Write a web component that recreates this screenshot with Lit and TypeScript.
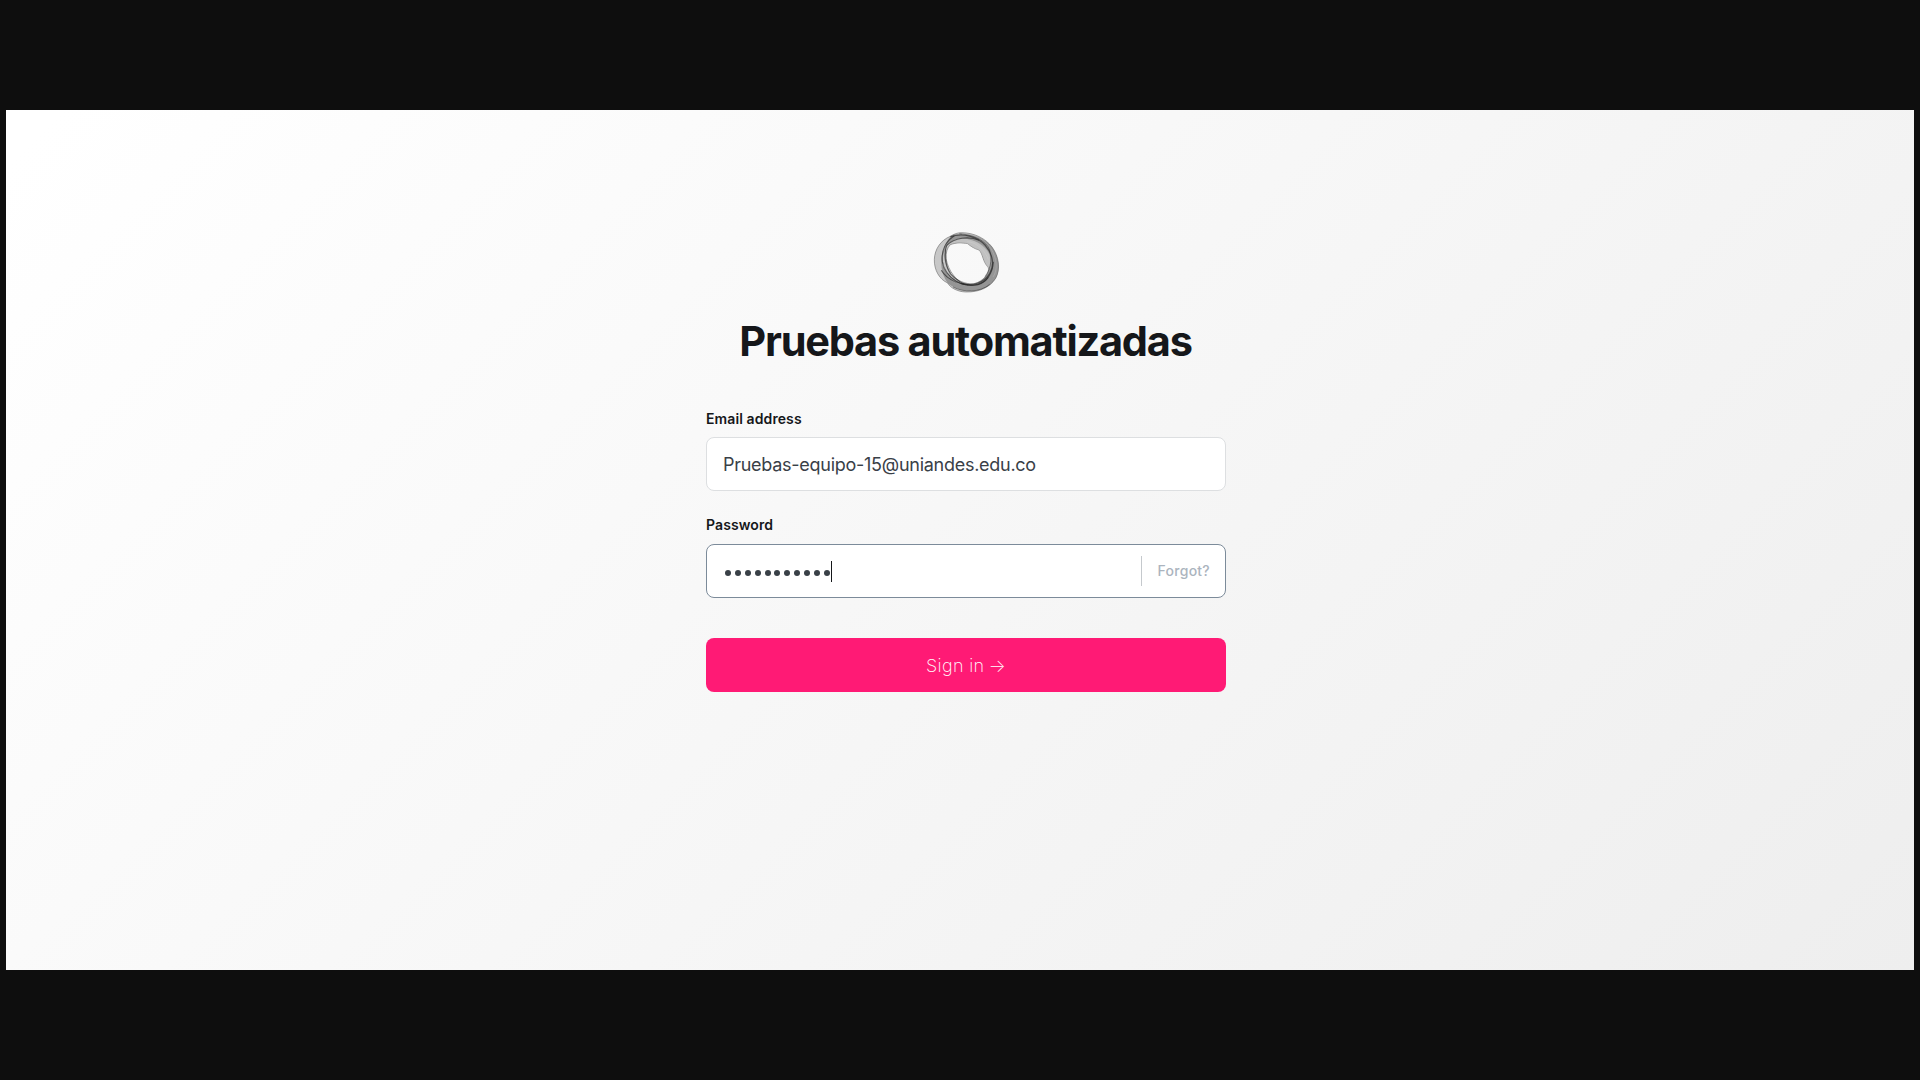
import { LitElement, html, css } from "lit";
import { customElement } from "lit/decorators.js";

@customElement("app-root")
export class AppRoot extends LitElement {
  static styles = css`
    :host {
      display: block;
      box-sizing: border-box;
      width: 1920px;
      height: 1080px;
      padding: 110px 6px;
      background: #0e0e0e;
      font-family: Inter, "Liberation Sans", sans-serif;
      color: #15171a;
    }
    * { box-sizing: border-box; }
    .screen {
      display: flex;
      justify-content: center;
      height: 860px;
      padding: 110px 0 0 12px;
      background: linear-gradient(135deg, #ffffff 2%, #eeeeee 100%);
    }
    .form {
      display: flex;
      flex-direction: column;
      width: 520px;
    }
    .logo {
      display: block;
      width: 90px;
      height: 85px;
      margin: 0 auto;
    }
    h1 {
      margin: 12px 1px 0 0;
      height: 48px;
      line-height: 48px;
      font-size: 41.5px;
      font-weight: 700;
      letter-spacing: -1.22px;
      text-align: center;
      white-space: nowrap;
    }
    .label {
      margin-top: 44px;
      height: 20px;
      line-height: 20px;
      font-size: 14px;
      font-weight: 600;
      letter-spacing: 0.1px;
    }
    .label.second { margin-top: 24px; }
    .field {
      display: flex;
      align-items: center;
      height: 54px;
      margin-top: 8px;
      padding: 0 15px 0 16px;
      border: 1px solid #dddfe1;
      border-radius: 8px;
      background: #fff;
      color: #394047;
      font-size: 18px;
      letter-spacing: -0.27px;
    }
    .second + .field { margin-top: 9px; }
    .field.focused { border-color: #7c8b9a; }
    .dots {
      display: flex;
      gap: 3.9px;
      padding: 3px 1px 0 2px;
    }
    .dot {
      width: 6px;
      height: 6px;
      border-radius: 50%;
      background: #394047;
    }
    .caret {
      width: 1px;
      height: 21px;
      background: #15171a;
    }
    .forgot {
      display: flex;
      align-items: center;
      height: 30px;
      margin-left: auto;
      padding: 0 0 2px 16px;
      border-left: 1px solid #c5c9cd;
      color: #abb4be;
      font-size: 14px;
      font-weight: 500;
      letter-spacing: 0.25px;
    }
    .button {
      display: flex;
      align-items: center;
      justify-content: center;
      gap: 4px;
      height: 54px;
      margin-top: 40px;
      border-radius: 8px;
      background: #ff1a75;
      color: #fff;
      font-size: 18px;
      font-weight: 250;
      letter-spacing: 0.32px;
    }
  `;

  render() {
    return html`
      <main class="screen">
        <section class="form">
          <svg class="logo" viewBox="3 0 270 255" fill="none" stroke-linejoin="round">
            <path fill="#777" fill-opacity=".38" fill-rule="evenodd" stroke="#555" stroke-width="1.5"
              d="M124 38C164 38 197 56 216 81C237 109 242 148 227 175C208 203 178 217 137 216C113 215 91 204 83 189C58 178 42 150 43 118C44 87 63 60 91 49C102 42 112 38 124 38Z
                 M91 74C72 92 75 137 91 163C110 181 137 194 162 191C192 184 212 155 205 142C187 125 190 103 177 90C160 85 149 76 143 71C126 68 109 67 91 74Z" />
            <path fill="#505050" fill-opacity=".42" fill-rule="evenodd"
              d="M103 43C150 35 196 54 216 81C241 116 242 159 222 183C197 217 124 226 83 189C64 165 57 121 71 87C78 66 87 51 103 43Z
                 M109 57C75 67 60 112 74 145C88 177 132 202 166 193C203 180 219 133 207 101C191 70 146 49 109 57Z" />
            <path fill="#bbb" fill-opacity=".5" d="M88 73C101 60 123 56 147 59C187 65 212 93 212 119C211 133 208 142 204 146C190 126 191 99 176 89C157 88 151 72 139 71C119 66 101 68 88 73Z" />
            <g stroke="#282828" stroke-width="3.5" stroke-opacity=".68">
              <path d="M91 50C129 38 171 49 195 75C218 101 225 135 209 161C191 190 157 199 123 190" />
              <path d="M118 41C155 45 186 55 204 80C219 105 215 142 195 170" stroke-width="2" />
              <path d="M103 47C78 63 63 91 67 125C71 151 86 170 109 184C140 203 183 200 205 172" />
              <path d="M80 76C70 103 75 137 93 162C105 177 122 190 145 195" />
              <path d="M77 88C74 126 90 162 119 184" stroke-width="2" />
              <path d="M64 151C81 181 127 200 174 194C202 186 218 157 220 125" />
              <path d="M80 76C103 53 147 47 177 61" />
              <path d="M99 201C131 218 179 218 209 193" stroke-width="2" />
            </g>
            <g stroke="#e6e6e6" stroke-width="1.5" stroke-opacity=".4">
              <path d="M126 42C163 42 192 58 213 86C231 116 234 150 219 171" />
              <path d="M69 132C76 160 92 181 119 192" />
              <path d="M142 65C172 67 197 94 205 119" />
            </g>
          </svg>
          <h1>Pruebas automatizadas</h1>
          <div class="label">Email address</div>
          <div class="field">Pruebas-equipo-15@uniandes.edu.co</div>
          <div class="label second">Password</div>
          <div class="field focused">
            <span class="dots">${Array.from({ length: 11 }, () => html`<i class="dot"></i>`)}</span>
            <span class="caret"></span>
            <span class="forgot">Forgot?</span>
          </div>
          <div class="button"><span>Sign in</span><span>→</span></div>
        </section>
      </main>
    `;
  }
}
